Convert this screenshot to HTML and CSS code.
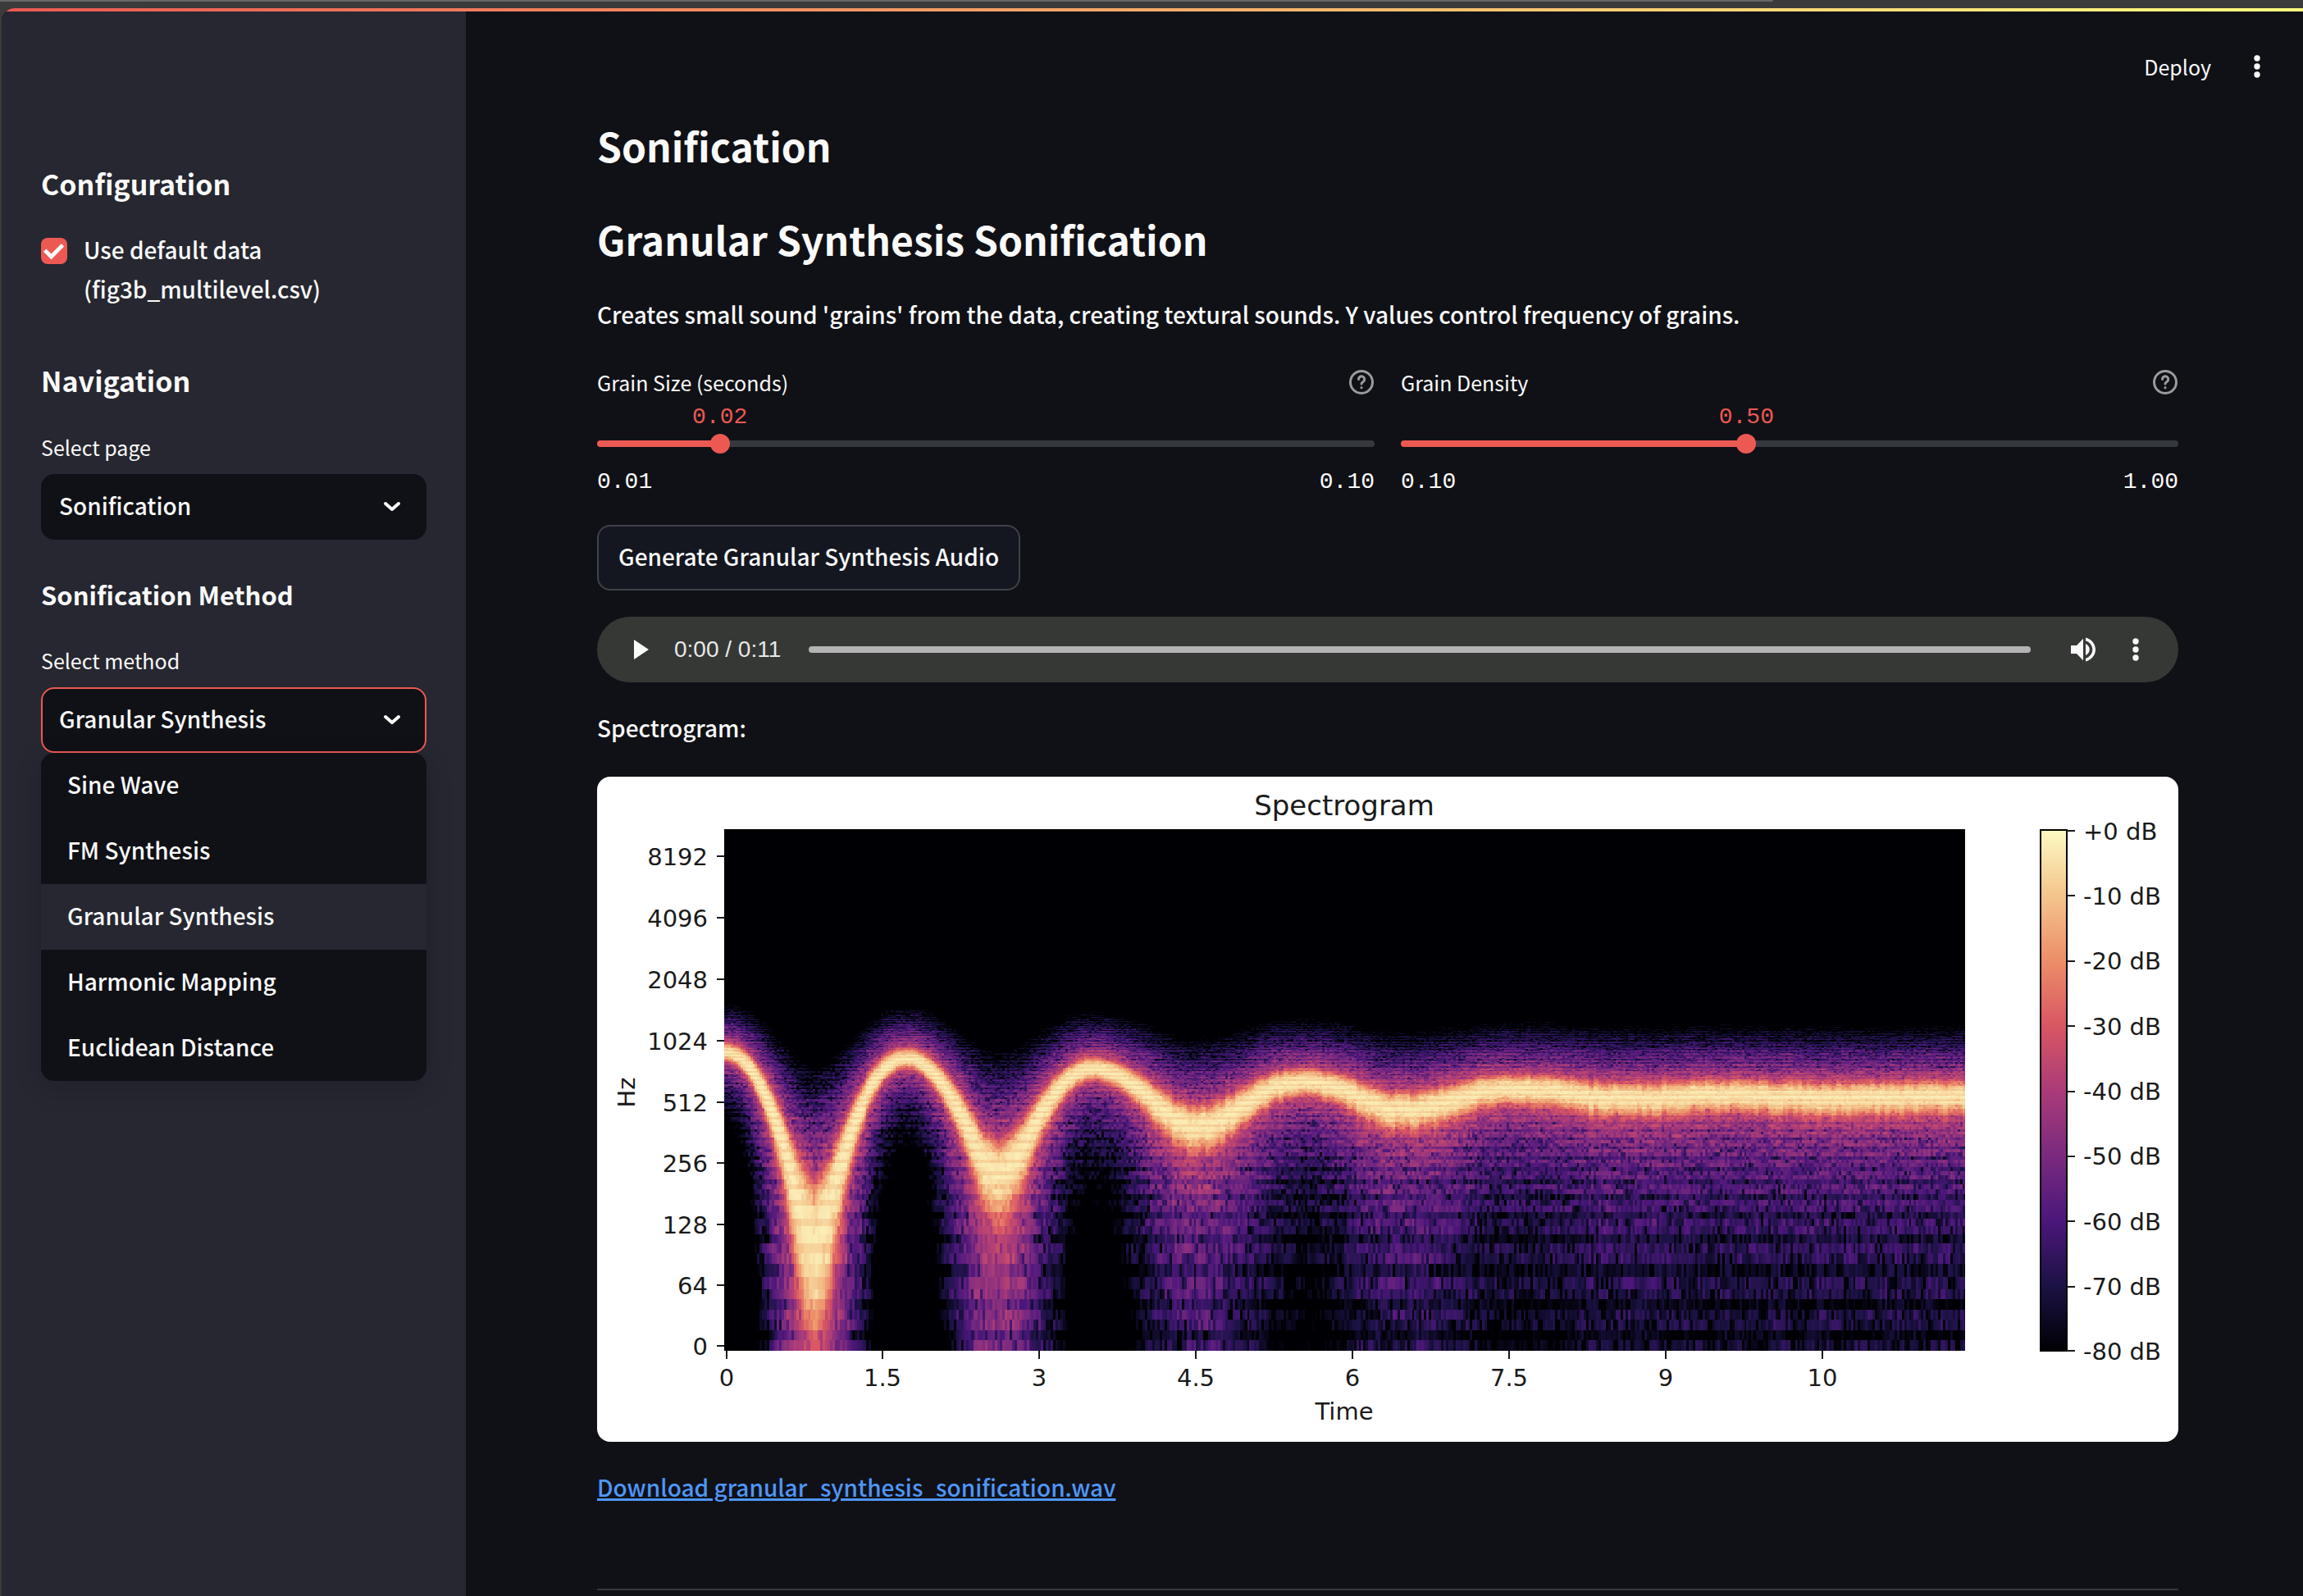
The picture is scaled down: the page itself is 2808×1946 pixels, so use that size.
FILE: index.html
```html
<!DOCTYPE html>
<html lang="en">
<head>
<meta charset="utf-8">
<title>Sonification</title>
<link rel="stylesheet" href="styles.css">
</head>
<body>
<div class="browser-edge"><div class="browser-edge-tab"></div></div>
<div class="app">
  <div class="decoration"></div>
  <header class="toolbar">
    <button class="deploy" type="button">Deploy</button>
    <button class="icon-button" type="button" aria-label="Main menu">
      <svg width="32" height="32" viewBox="0 0 32 32" fill="currentColor"><circle cx="16" cy="6" r="3.700"/><circle cx="16" cy="16" r="3.700"/><circle cx="16" cy="26" r="3.700"/></svg>
    </button>
  </header>
  <div class="columns">
    <aside class="sidebar">
      <h2 class="side-title">Configuration</h2>
      <label class="check">
        <input class="check-box" type="checkbox" checked>
        <span>Use default data (fig3b_multilevel.csv)</span>
      </label>
      <h2 class="side-title">Navigation</h2>
      <div class="field">
        <label class="field-label" for="page">Select page</label>
        <div class="select-wrap">
          <select class="select" id="page"><option>Sonification</option></select>
          <svg class="chevron" width="24" height="16" viewBox="0 0 24 16"><path d="M4 4l8 7 8-7" fill="none" stroke="currentColor" stroke-width="4" stroke-linecap="round" stroke-linejoin="round"/></svg>
        </div>
      </div>
      <h3 class="side-subtitle">Sonification Method</h3>
      <div class="field">
        <label class="field-label" for="method">Select method</label>
        <div class="select-wrap">
          <select class="select select-open" id="method"><option>Granular Synthesis</option></select>
          <svg class="chevron" width="24" height="16" viewBox="0 0 24 16"><path d="M4 4l8 7 8-7" fill="none" stroke="currentColor" stroke-width="4" stroke-linecap="round" stroke-linejoin="round"/></svg>
          <ul class="menu" role="listbox" aria-label="Select method">
            <li class="menu-item" role="option">Sine Wave</li>
            <li class="menu-item" role="option">FM Synthesis</li>
            <li class="menu-item menu-item-active" role="option" aria-selected="true">Granular Synthesis</li>
            <li class="menu-item" role="option">Harmonic Mapping</li>
            <li class="menu-item" role="option">Euclidean Distance</li>
          </ul>
        </div>
      </div>
    </aside>
    <main class="main">
      <h1 class="title">Sonification</h1>
      <h2 class="title">Granular Synthesis Sonification</h2>
      <p class="text">Creates small sound 'grains' from the data, creating textural sounds. Y values control frequency of grains.</p>
      <div class="sliders">
        <div class="slider" style="--p: 0.149">
          <div class="slider-head">
            <label class="field-label" for="size">Grain Size (seconds)</label>
            <svg class="help" width="32" height="32" viewBox="0 0 32 32" fill="none" stroke="currentColor" stroke-width="3" stroke-linecap="round"><circle cx="16" cy="16" r="13.5"/><path d="M12.500 12.500a3.600 3.600 0 1 1 5.500 3c-1.300.8-2 1.300-2 2.500"/><path d="M16 22.500v.2"/></svg>
          </div>
          <div class="slider-value"><output class="bubble" for="size">0.02</output></div>
          <input class="range" id="size" type="range" min="0" max="1" step="any" value="0.149">
          <div class="slider-ends"><span>0.01</span><span>0.10</span></div>
        </div>
        <div class="slider" style="--p: 0.443">
          <div class="slider-head">
            <label class="field-label" for="density">Grain Density</label>
            <svg class="help" width="32" height="32" viewBox="0 0 32 32" fill="none" stroke="currentColor" stroke-width="3" stroke-linecap="round"><circle cx="16" cy="16" r="13.5"/><path d="M12.500 12.500a3.600 3.600 0 1 1 5.500 3c-1.300.8-2 1.300-2 2.500"/><path d="M16 22.500v.2"/></svg>
          </div>
          <div class="slider-value"><output class="bubble" for="density">0.50</output></div>
          <input class="range" id="density" type="range" min="0" max="1" step="any" value="0.443">
          <div class="slider-ends"><span>0.10</span><span>1.00</span></div>
        </div>
      </div>
      <button class="button" type="button">Generate Granular Synthesis Audio</button>
      <div class="player">
        <button class="icon-button" type="button" aria-label="Play">
          <svg width="32" height="32" viewBox="0 0 32 32" fill="currentColor"><path d="M7 4v24l18-12z"/></svg>
        </button>
        <span class="time">0:00 / 0:11</span>
        <progress class="progress" max="11" value="0" aria-label="Position"></progress>
        <button class="icon-button" type="button" aria-label="Mute">
          <svg width="40" height="40" viewBox="0 0 40 40" fill="currentColor"><path d="M5 15v10h7l8 8.300V6.700L12 15z"/><path d="M23 13v14c2.800-1.300 4.700-4 4.700-7s-1.900-5.700-4.700-7z"/><path d="M23 5.500v3.700c4.800 1.400 8.300 5.700 8.300 10.800S27.800 29.400 23 30.800v3.700c6.800-1.500 12-7.400 12-14.500S29.800 7 23 5.500z"/></svg>
        </button>
        <button class="icon-button" type="button" aria-label="More options">
          <svg width="32" height="32" viewBox="0 0 32 32" fill="currentColor"><circle cx="16" cy="6" r="3.700"/><circle cx="16" cy="16" r="3.700"/><circle cx="16" cy="26" r="3.700"/></svg>
        </button>
      </div>
      <p class="text">Spectrogram:</p>
      <figure class="figure">
        <svg class="axes" viewBox="0 0 1928 811" role="img" aria-label="Spectrogram">
          <defs>
            <linearGradient id="magma" x1="0" y1="0" x2="0" y2="1">
              <stop offset="0" stop-color="#fcfbc3"/><stop offset=".125" stop-color="#f4c58d"/><stop offset=".25" stop-color="#ec8e69"/><stop offset=".375" stop-color="#d95763"/><stop offset=".5" stop-color="#aa3b78"/><stop offset=".625" stop-color="#7a2a7f"/><stop offset=".75" stop-color="#4b177a"/><stop offset=".875" stop-color="#1c1245"/><stop offset="1" stop-color="#000004"/>
            </linearGradient>
          </defs>
          <text class="plot-title" x="911" y="47" text-anchor="middle">Spectrogram</text>
          <g class="tick" text-anchor="end">
            <text x="135" y="108">8192</text><text x="135" y="183">4096</text><text x="135" y="258">2048</text><text x="135" y="333">1024</text><text x="135" y="408">512</text><text x="135" y="482">256</text><text x="135" y="557">128</text><text x="135" y="631">64</text><text x="135" y="705">0</text>
          </g>
          <g class="tick" text-anchor="middle">
            <text x="158" y="743">0</text><text x="348" y="743">1.5</text><text x="539" y="743">3</text><text x="730" y="743">4.5</text><text x="921" y="743">6</text><text x="1112" y="743">7.5</text><text x="1303" y="743">9</text><text x="1494" y="743">10</text>
            <text x="911" y="784">Time</text>
            <text transform="translate(46 385) rotate(-90)">Hz</text>
          </g>
          <g class="tick">
            <text x="1812" y="77">+0 dB</text><text x="1812" y="156">-10 dB</text><text x="1812" y="235">-20 dB</text><text x="1812" y="315">-30 dB</text><text x="1812" y="394">-40 dB</text><text x="1812" y="473">-50 dB</text><text x="1812" y="553">-60 dB</text><text x="1812" y="632">-70 dB</text><text x="1812" y="711">-80 dB</text>
          </g>
          <rect x="1760" y="65" width="32" height="635" fill="url(#magma)" stroke="#000" stroke-width="2"/>
          <path class="marks" d="M146 97h10M146 172h10M146 247h10M146 322h10M146 397h10M146 471h10M146 546h10M146 620h10M146 694h10M158 700v10M348 700v10M539 700v10M730 700v10M921 700v10M1112 700v10M1303 700v10M1494 700v10M1792 66h10M1792 145h10M1792 225h10M1792 304h10M1792 384h10M1792 463h10M1792 542h10M1792 622h10M1792 700h10"/>
        </svg>
        <canvas class="plot" id="plot" width="1513" height="636"></canvas>
      </figure>
      <p class="text"><a class="link" href="#">Download granular_synthesis_sonification.wav</a></p>
      <hr class="rule">
    </main>
  </div>
</div>
<script src="plot.js"></script>
</body>
</html>
```
FILE: styles.css
```css
* {
  box-sizing: border-box;
  margin: 0;
}

body {
  display: flex;
  flex-direction: column;
  min-height: 100vh;
  background: #3a3b3a;
  color: #fafafa;
  font-family: "Noto Sans CJK SC", "Noto Sans", sans-serif;
  font-size: 28px;
  font-weight: 500;
  line-height: 48px;
}

button,
select {
  font: inherit;
  color: inherit;
}

h1,
h2,
h3 {
  font-weight: 700;
}

.browser-edge {
  height: 10px;
}

.browser-edge-tab {
  width: 77%;
  height: 2px;
  border-bottom-right-radius: 8px;
  background: #666766;
}

.app {
  position: relative;
  display: flex;
  flex: 1;
  flex-direction: column;
  margin-left: 2px;
  overflow: hidden;
  border-top-left-radius: 16px;
  background: #101116;
}

.decoration {
  height: 4px;
  background: linear-gradient(90deg, #ec5953, #fffd80);
}

.toolbar {
  position: absolute;
  top: 47px;
  right: 40px;
  display: flex;
  align-items: center;
  gap: 40px;
}

.deploy {
  padding: 0;
  border: 0;
  background: none;
  font-size: 25px;
  font-weight: 400;
}

.icon-button {
  display: flex;
  padding: 0;
  border: 0;
  background: none;
}

.columns {
  display: flex;
  flex: 1;
}

.sidebar {
  flex: 0 0 566px;
  padding: 186px 48px 48px;
  background: #262730;
}

.side-title {
  font-size: 34px;
}

.side-subtitle {
  margin-top: 44px;
  font-size: 31px;
  line-height: 46px;
}

.check {
  display: flex;
  gap: 20px;
  margin: 32px 0 64px;
}

.check-box {
  position: relative;
  flex: none;
  width: 32px;
  height: 32px;
  margin: 10px 0 0;
  appearance: none;
  border-radius: 8px;
  background: #ec5953;
}

.check-box::before {
  content: "";
  position: absolute;
  inset: 0;
  background: #fafafa;
  clip-path: polygon(9% 52%, 20% 42%, 39% 61%, 78% 22%, 88% 33%, 39% 83%);
}

.field {
  margin-top: 36px;
}

.field-label {
  display: block;
  font-size: 25px;
  font-weight: 400;
  line-height: 42px;
}

.select-wrap {
  position: relative;
  margin-top: 12px;
}

.select {
  display: block;
  width: 100%;
  height: 80px;
  padding: 0 20px 4px;
  appearance: none;
  border: 2px solid #101116;
  border-radius: 16px;
  background: #101116;
}

.select-open {
  border-color: #ec5953;
}

.chevron {
  position: absolute;
  top: 32px;
  right: 30px;
  pointer-events: none;
}

.menu {
  position: absolute;
  top: 80px;
  left: 0;
  right: 0;
  padding: 0;
  overflow: hidden;
  border-radius: 16px;
  background: #101116;
  box-shadow: 0 8px 32px rgba(14, 10, 30, 0.2);
  list-style: none;
}

.menu-item {
  padding: 0 32px 4px;
  line-height: 76px;
}

.menu-item-active {
  background: #262730;
}

.main {
  flex: 1;
  min-width: 0;
  padding: 133px 152px 0 160px;
}

.title {
  margin-bottom: 54px;
  font-size: 48px;
  line-height: 60px;
}

.title + .title {
  margin-bottom: 36px;
}

.text {
  line-height: 52px;
}

.sliders {
  display: grid;
  grid-template-columns: 1fr 1fr;
  gap: 32px;
  margin: 36px 0;
}

.slider-head {
  display: flex;
  align-items: center;
  justify-content: space-between;
}

.help {
  color: #9a9b9d;
}

.slider-value,
.slider-ends {
  font-family: "Liberation Mono", monospace;
  font-size: 28px;
  font-weight: 400;
  line-height: 34px;
}

.slider-value {
  position: relative;
  height: 42px;
}

.bubble {
  position: absolute;
  top: 5px;
  left: calc(12px + (100% - 24px) * var(--p));
  transform: translateX(-50%);
  color: #ec5953;
}

.range {
  display: block;
  width: 100%;
  height: 24px;
  margin: 0;
  appearance: none;
  background: none;
}

.range::-webkit-slider-runnable-track {
  height: 8px;
  border-radius: 4px;
  background: linear-gradient(#ec5953, #ec5953) 0 0 / calc(12px + (100% - 24px) * var(--p)) 100% no-repeat #36383f;
}

.range::-webkit-slider-thumb {
  width: 24px;
  height: 24px;
  margin-top: -8px;
  appearance: none;
  border-radius: 50%;
  background: #ec5953;
}

.slider-ends {
  display: flex;
  justify-content: space-between;
  margin-top: 18px;
}

.button {
  display: block;
  height: 80px;
  margin-top: -1px;
  padding: 0 24px 4px;
  border: 2px solid #40424a;
  border-radius: 16px;
  background: #141720;
}

.player {
  display: flex;
  align-items: center;
  height: 80px;
  margin: 32px 0 29px;
  padding: 0 36px 0 38px;
  border-radius: 40px;
  background: #363836;
}

.time {
  margin: 0 34px 0 24px;
  color: #e8e8e8;
  font-family: "Liberation Sans", sans-serif;
  font-size: 28px;
  font-weight: 400;
}

.progress {
  flex: 1;
  height: 8px;
  margin-right: 44px;
  appearance: none;
  border: 0;
}

.progress::-webkit-progress-bar {
  border-radius: 4px;
  background: #b4b4b4;
}

.player .icon-button + .icon-button {
  margin-left: 28px;
}

.figure {
  position: relative;
  margin: 34px 0 29px;
  overflow: hidden;
  border-radius: 16px;
  background: #fff;
}

.axes {
  display: block;
  width: 100%;
}

.tick,
.plot-title {
  fill: #1a1a1a;
  font-family: "DejaVu Sans", sans-serif;
  font-size: 29px;
  font-weight: 400;
}

.plot-title {
  font-size: 34px;
}

.marks {
  fill: none;
  stroke: #1a1a1a;
  stroke-width: 2;
}

.plot {
  position: absolute;
  top: 7.9%;
  left: 8.04%;
  width: 78.48%;
  height: 78.42%;
}

.link {
  color: #4f96f8;
  text-decoration-thickness: 3px;
}

.rule {
  margin-top: 98px;
  border: 0;
  border-top: 2px solid #36383f;
}
```
FILE: plot.js
```js
// Draws the spectrogram: STFT frames of 512 samples, bins of sampleRate / 2048.
const canvas = document.getElementById("plot");
const ctx = canvas.getContext("2d");
const W = canvas.width;
const H = canvas.height;
const FRAME = 512 / 22050;
const BIN = 22050 / 2048;

const magma = [
  [0, 0, 4], [28, 18, 69], [75, 23, 122], [122, 42, 127], [170, 59, 120],
  [217, 87, 99], [236, 142, 105], [244, 197, 141], [252, 251, 195]
];

// Turning points of the sonified curve: seconds, hertz.
const turns = [
  [-1, 880], [-0.02, 880], [0.83, 105], [1.71, 824], [2.6, 225], [3.5, 731],
  [4.49, 384], [5.5, 635], [6.5, 465], [7.5, 585], [8.6, 525], [9.5, 548],
  [10.5, 530], [11.5, 540], [12.5, 535]
];

// Level in dB by distance from the curve in hertz.
const falloff = [
  [0, -3], [45, -6], [70, -15], [95, -28], [130, -39], [225, -51],
  [384, -64], [465, -71], [540, -75], [640, -84], [800, -98], [20000, -120]
];

function interpolate(points, x, ease) {
  let i = 0;
  while (i < points.length - 2 && x > points[i + 1][0]) i++;
  const [x0, y0] = points[i];
  const [x1, y1] = points[i + 1];
  let u = Math.min(1, Math.max(0, (x - x0) / (x1 - x0)));
  if (ease) u = (1 - Math.cos(Math.PI * u)) / 2;
  return y0 + (y1 - y0) * u;
}

function noise(a, b) {
  let h = Math.imul(a + 101, 374761393) ^ Math.imul(b + 57, 668265263);
  h = Math.imul(h ^ (h >>> 13), 1274126177);
  h ^= h >>> 16;
  return (h >>> 0) / 4294967296;
}

function frequency(y) {
  return y > 555 ? (629 - y) * 64 / 74 : 64 * Math.pow(2, (555 - y) / 74.7);
}

function level(frame, bin) {
  const t = frame * FRAME;
  const jitter = (noise(frame >> 1, 7) - 0.5) * (t > 4 ? 22 : 10);
  const f0 = interpolate(turns, t, true) + jitter;
  const slope = Math.abs(interpolate(turns, t + 0.03, true) - interpolate(turns, t - 0.03, true)) / 0.06;
  const f = bin * BIN;
  let d = Math.max(0, Math.abs(f - f0) - slope * 0.015);
  if (f < f0) d *= 1 + 0.35 * Math.max(0, (f0 - 540) / 340);
  let db = interpolate(falloff, d, false);
  const far = Math.min(1, d / 200);
  const r = noise(frame, bin * 3 + 11);
  db += Math.max(-22, Math.log(r + 0.04) * 6 + 5) * (0.12 + far);
  const run = noise(Math.floor(frame / 5), bin * 5 + 3);
  if (bin % 3 === 1) db -= (2 + run * 7) * far;
  else db += (run - 0.3) * 8 * far;
  if (d < 70 && bin % 3 === 0) db -= 4;
  return db;
}

const image = ctx.createImageData(W, H);
for (let y = 0; y < H; y++) {
  const bin = Math.max(0, Math.round(frequency(y) / BIN));
  for (let x = 0; x < W; x++) {
    const frame = Math.max(0, Math.round((x - 3) / 127.3 / FRAME));
    const v = Math.min(1, Math.max(0, (level(frame, bin) + 80) / 80)) * 8;
    const i = Math.min(7, Math.floor(v));
    const p = (y * W + x) * 4;
    for (let c = 0; c < 3; c++) {
      image.data[p + c] = magma[i][c] + (magma[i + 1][c] - magma[i][c]) * (v - i);
    }
    image.data[p + 3] = 255;
  }
}
ctx.putImageData(image, 0, 0);
```
